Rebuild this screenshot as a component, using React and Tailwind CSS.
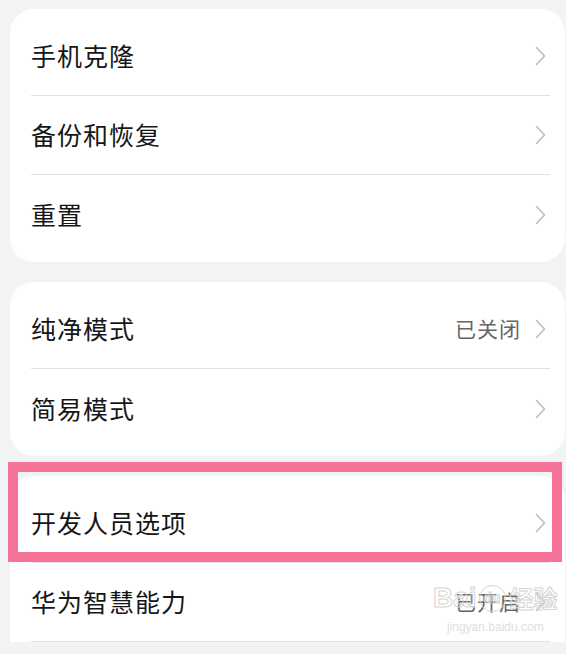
import React from 'react';

const Chevron = () => (
  <svg width="11" height="20" viewBox="0 0 11 20" fill="none" className="mr-[4px] shrink-0">
    <path d="M1.5 1.5L9.5 10L1.5 18.5" stroke="#bdbdbd" strokeWidth="1.6" strokeLinecap="round" strokeLinejoin="round" />
  </svg>
);

const Row = ({ title, status, last }) => (
  <div
    className={`h-[79px] ml-[21px] mr-[15px] flex items-center justify-between ${
      last ? '' : 'border-b border-[#e1e1e1]'
    }`}
  >
    <span className="text-[25px] text-[#161616] font-normal tracking-[1px]">{title}</span>
    <div className="flex items-center gap-[14px]">
      {status && <span className="text-[21px] text-[#666666] tracking-[1px]">{status}</span>}
      <Chevron />
    </div>
  </div>
);

const Card = ({ items, open }) => (
  <div className={`ml-[10px] mr-[1px] bg-white rounded-[24px] pt-[8px] ${open ? 'rounded-b-none' : 'pb-[8px]'}`}>
    {items.map((it, i) => (
      <Row key={it.title} {...it} last={!open && i === items.length - 1} />
    ))}
  </div>
);

export default function App() {
  return (
    <div
      className="relative w-[566px] h-[654px] overflow-hidden bg-[#f1f3f5] pt-[9px] flex flex-col gap-[20px]"
      style={{ fontFamily: '"Noto Sans CJK SC", "Noto Sans", sans-serif' }}
    >
      <Card
        items={[
          { title: '手机克隆' },
          { title: '备份和恢复' },
          { title: '重置' },
        ]}
      />
      <Card
        items={[
          { title: '纯净模式', status: '已关闭' },
          { title: '简易模式' },
        ]}
      />
      <Card
        open
        items={[
          { title: '开发人员选项' },
          { title: '华为智慧能力', status: '已开启' },
        ]}
      />

      {/* highlight box */}
      <div className="absolute left-[8px] right-[4px] top-[462px] h-[100px] border-[10px] border-[#f57398]" />

      {/* watermark */}
      <div className="absolute left-[433px] top-[584px] flex flex-col items-center text-transparent pointer-events-none [-webkit-text-stroke:1px_#d4d4d4]">
        <div className="flex items-center gap-[2px] leading-none">
          <span className="text-[28px] font-bold" style={{ fontFamily: '"Liberation Sans", sans-serif' }}>Bai</span>
          <span className="w-[27px] h-[27px] rounded-full border border-[#d4d4d4] flex items-center justify-center text-[14px] font-bold" style={{ fontFamily: '"Liberation Sans", sans-serif' }}>du</span>
          <span className="text-[24px] font-bold ml-[2px]">经验</span>
        </div>
        <span className="text-[12px] mt-[6px] text-[#e0e0e0] [-webkit-text-stroke:0px]" style={{ fontFamily: '"Liberation Sans", sans-serif' }}>jingyan.baidu.com</span>
      </div>
    </div>
  );
}
